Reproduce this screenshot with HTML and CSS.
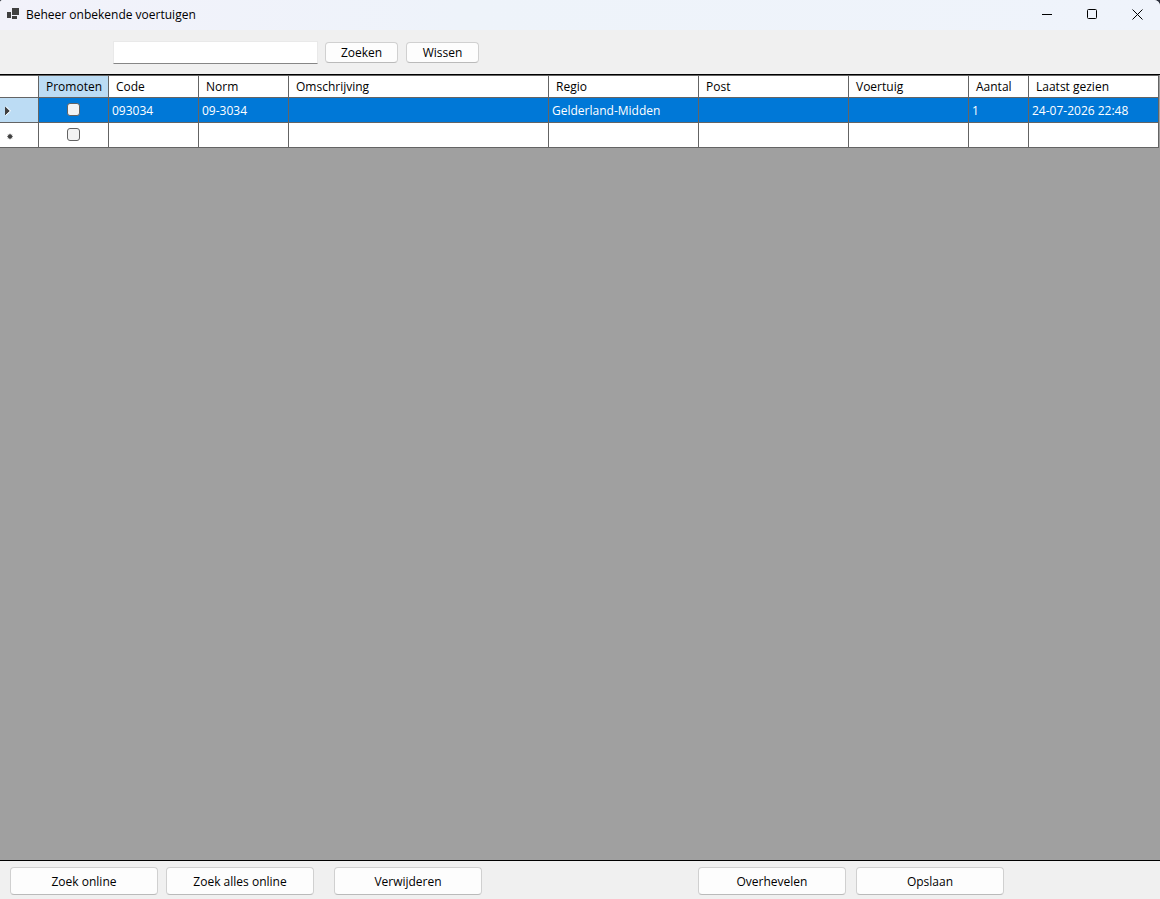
FILE: index.html
```html
<!DOCTYPE html>
<html lang="nl">
<head>
  <meta charset="UTF-8"/>
  <meta name="viewport" content="width=device-width, initial-scale=1.0"/>
  <title>Beheer onbekende voertuigen</title>
  <link rel="stylesheet" href="styles.css">
</head>
<body>

  <div class="window">
    <header class="titlebar">
      <svg class="app-icon" width="12" height="14" viewBox="0 0 12 14" shape-rendering="crispEdges" aria-hidden="true">
        <rect x="5" y="0" width="7" height="7"/>
        <rect x="0" y="4" width="4" height="6"/>
        <rect x="5" y="8" width="5" height="3"/>
      </svg>
      <h1>Beheer onbekende voertuigen</h1>
      <div class="window-controls">
        <button type="button" aria-label="Minimaliseren">
          <svg width="11" height="11" viewBox="0 0 11 11"><path d="M0 5.5h10"/></svg>
        </button>
        <button type="button" aria-label="Maximaliseren">
          <svg width="11" height="11" viewBox="0 0 11 11"><rect x="0.5" y="0.5" width="9" height="9" rx="1"/></svg>
        </button>
        <button type="button" aria-label="Sluiten">
          <svg width="11" height="11" viewBox="0 0 11 11"><path d="M0.500 0.500l10 10M10.500 0.500l-10 10"/></svg>
        </button>
      </div>
    </header>

    <form class="toolbar">
      <input type="text" class="search" aria-label="Zoekterm">
      <button type="button" class="btn btn-small">Zoeken</button>
      <button type="reset" class="btn btn-small">Wissen</button>
    </form>

    <main class="grid">
      <table>
        <colgroup>
          <col class="col-marker">
          <col class="col-promote">
          <col class="col-code">
          <col class="col-code">
          <col>
          <col class="col-place">
          <col class="col-place">
          <col class="col-vehicle">
          <col class="col-count">
          <col class="col-date">
        </colgroup>
        <thead>
          <tr>
            <th></th>
            <th class="current">Promoten</th>
            <th>Code</th>
            <th>Norm</th>
            <th>Omschrijving</th>
            <th>Regio</th>
            <th>Post</th>
            <th>Voertuig</th>
            <th>Aantal</th>
            <th>Laatst gezien</th>
          </tr>
        </thead>
        <tbody>
          <tr class="selected">
            <td class="marker">
              <svg width="6" height="10" viewBox="0 0 6 10" aria-hidden="true"><path d="M0 0.500L5 5L0 9.500z"/><path class="edge" d="M0.500 9.500L5.500 5L1 0.500"/></svg>
            </td>
            <td class="check"><input type="checkbox" aria-label="Promoten 093034"></td>
            <td>093034</td>
            <td>09-3034</td>
            <td></td>
            <td>Gelderland-Midden</td>
            <td></td>
            <td></td>
            <td>1</td>
            <td>24-07-2026 22:48</td>
          </tr>
          <tr>
            <td class="marker">
              <svg class="new-row" width="10" height="8" viewBox="0 0 10 8" aria-hidden="true"><circle cx="5" cy="4.500" r="2"/><path d="M5 1.500v6M2 4.500h6M3 2.500l4 4M7 2.500l-4 4"/></svg>
            </td>
            <td class="check"><input type="checkbox" aria-label="Promoten nieuwe rij"></td>
            <td></td>
            <td></td>
            <td></td>
            <td></td>
            <td></td>
            <td></td>
            <td></td>
            <td></td>
          </tr>
        </tbody>
      </table>
    </main>

    <footer class="actions">
      <div class="group group-search">
        <button type="button" class="btn">Zoek online</button>
        <button type="button" class="btn">Zoek alles online</button>
      </div>
      <button type="button" class="btn">Verwijderen</button>
      <div class="group group-save">
        <button type="button" class="btn">Overhevelen</button>
        <button type="button" class="btn">Opslaan</button>
      </div>
    </footer>
  </div>

</body>
</html>
```
FILE: styles.css
```css
:root {
  --face: #f0f0f0;
  --line: #646464;
  --highlight: #0078d7;
  --header-current: #bcdcf4;
}

* {
  box-sizing: border-box;
}

body {
  margin: 0;
  background-color: #2c303c;
  font-family: 'Segoe UI', 'Open Sans', sans-serif;
  font-size: 12px;
  line-height: 16px;
  color: #000;
}

.window {
  display: flex;
  flex-direction: column;
  min-height: 100vh;
  background-color: var(--face);
  border-radius: 3px 6px 0 0;
  overflow: hidden;
}

button, input {
  font: inherit;
  color: inherit;
}

/* Title bar */
.titlebar {
  display: flex;
  align-items: center;
  height: 30px;
  padding-left: 7px;
  background: linear-gradient(to right, #f2f2fa, #eef3fa 40%, #eff3fb);
}

.app-icon {
  fill: #404040;
  margin-right: 7px;
}

h1 {
  margin: 0;
  font-size: 12px;
  font-weight: normal;
}

.window-controls {
  display: flex;
  align-self: flex-start;
  margin-left: auto;
}

.window-controls button {
  display: flex;
  align-items: center;
  justify-content: center;
  width: 45px;
  height: 29px;
  padding: 0;
  border: none;
  background: none;
}

.window-controls svg {
  fill: none;
  stroke: #000;
}

/* Search bar */
.toolbar {
  display: flex;
  align-items: center;
  gap: 7px;
  height: 44px;
  padding-left: 113px;
}

.search {
  width: 205px;
  height: 23px;
  padding: 2px 4px;
  border: 1px solid #e9e9e9;
  border-bottom-color: #868686;
  background-color: #fff;
  outline: none;
}

.btn {
  width: 148px;
  height: 28px;
  padding: 1px 0 0;
  border: 1px solid #d0d0d0;
  border-bottom-color: #bababa;
  border-radius: 4px;
  background-color: #fdfdfd;
}

.btn-small {
  width: 73px;
  height: 21px;
}

.btn-small + .btn-small {
  margin-left: 1px;
}

/* Data grid */
.grid {
  flex: 1;
  border-top: 1px solid #000;
  border-bottom: 1px solid #000;
  background-color: #a0a0a0;
}

table {
  width: calc(100% - 1px);
  table-layout: fixed;
  border-collapse: separate;
  border-spacing: 0;
  border-top: 1px solid var(--line);
  background-color: #fff;
}

.col-marker { width: 39px; }
.col-promote { width: 70px; }
.col-code { width: 90px; }
.col-place { width: 150px; }
.col-vehicle { width: 120px; }
.col-count { width: 60px; }
.col-date { width: 130px; }

th, td {
  border-right: 1px solid var(--line);
  border-bottom: 1px solid var(--line);
  text-align: left;
  white-space: nowrap;
}

th {
  height: 22px;
  padding: 0 7px;
  font-weight: normal;
}

td {
  height: 25px;
  padding: 2px 3px 0;
}

.current {
  background-color: var(--header-current);
}

.selected td {
  background-color: var(--highlight);
  color: #fff;
}

td.marker {
  padding: 2px 5px 0;
}

.selected .marker {
  background-color: var(--header-current);
}

.marker svg {
  display: block;
  fill: #404040;
}

.marker .edge {
  fill: none;
  stroke: #fff;
}

.marker .new-row {
  stroke: #404040;
  stroke-width: 0.5;
}

td.check {
  padding: 0 0 2px;
}

.check input {
  appearance: none;
  display: block;
  width: 13px;
  height: 13px;
  margin: 0 auto;
  border: 1px solid #626262;
  border-radius: 3px;
  background-color: #f3f3f3;
}

/* Bottom buttons */
.actions {
  display: flex;
  align-items: center;
  gap: 20px;
  height: 38px;
  padding: 2px 156px 0 10px;
}

.group {
  display: flex;
}

.group-search {
  gap: 8px;
}

.group-save {
  gap: 10px;
  margin-left: auto;
}
```
